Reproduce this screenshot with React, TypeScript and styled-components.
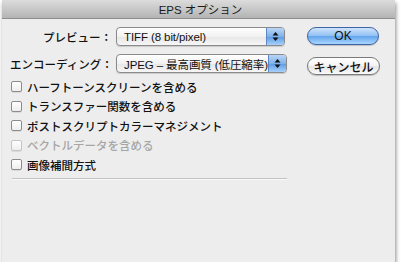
import React from "react";
import styled, { createGlobalStyle } from "styled-components";

const Global = createGlobalStyle`
  html, body { margin: 0; padding: 0; background: #ffffff; }
  body { font-family: "Liberation Sans", "Noto Sans CJK JP", sans-serif; }
`;

const FONT = `"Liberation Sans", "Noto Sans CJK JP", sans-serif`;

const Window = styled.div`
  margin-left: 2px;
  width: 393px;
  height: 262px;
  background: #ededed;
  box-shadow: 1px 3px 4px rgba(0, 0, 0, 0.45);
  display: flex;
  flex-direction: column;
`;

const TitleBar = styled.div`
  height: 18px;
  background: linear-gradient(#dcdcdc, #b4b4b4);
  border-bottom: 1px solid #8e8e8e;
  display: flex;
  align-items: center;
  justify-content: center;
  font-family: ${FONT};
  font-size: 11.5px;
  color: #1a1a1a;
  padding-left: 4px;
`;

const Body = styled.div`
  padding: 8px 0 0 8px;
  display: flex;
  flex-direction: column;
`;

const Top = styled.div`
  display: flex;
  align-items: flex-start;
`;

const Form = styled.div`
  display: grid;
  grid-template-columns: 102px auto;
  column-gap: 4px;
  row-gap: 8px;
  align-items: center;
`;

const Label = styled.div`
  text-align: right;
  font-family: ${FONT};
  font-size: 11.5px;
  font-weight: 500;
  color: #111;
  white-space: nowrap;
`;

const Popup = styled.div<{ $w: number }>`
  width: ${(p) => p.$w}px;
  height: 19px;
  box-sizing: border-box;
  border: 1px solid #8a8a8a;
  border-radius: 4px;
  background: linear-gradient(#ffffff, #f1f1f1 50%, #e6e6e6 51%, #f6f6f6);
  display: flex;
  align-items: stretch;
  overflow: hidden;
  box-shadow: 0 1px 1px rgba(0, 0, 0, 0.15);
`;

const PopupText = styled.div`
  flex: 1;
  min-width: 0;
  display: flex;
  align-items: center;
  padding-left: 7px;
  font-family: ${FONT};
  font-size: 11.5px;
  letter-spacing: -0.1px;
  color: #111;
  white-space: nowrap;
  overflow: hidden;
`;

const Arrows = styled.div`
  width: 17px;
  flex: none;
  border-left: 1px solid #5d86c4;
  background: linear-gradient(#b9d6f6, #80b2ea 50%, #5a9ae3 51%, #a8d0fb);
  display: flex;
  align-items: center;
  justify-content: center;
`;

const Buttons = styled.div`
  margin-left: 20px;
  display: flex;
  flex-direction: column;
  gap: 12px;
`;

const PushButton = styled.div<{ $default?: boolean; $w: number }>`
  width: ${(p) => p.$w}px;
  height: 18px;
  box-sizing: border-box;
  border-radius: 9px;
  border: 1px solid ${(p) => (p.$default ? "#3d64a6" : "#7a7a7a")};
  background: ${(p) =>
    p.$default
      ? "linear-gradient(#cfe4fb, #8fc0f3 50%, #62a3ec 51%, #a9d6ff)"
      : "linear-gradient(#ffffff, #f3f3f3 50%, #e4e4e4 51%, #fafafa)"};
  display: flex;
  align-items: center;
  justify-content: center;
  font-family: ${FONT};
  font-size: 12px;
  font-weight: 500;
  color: #111;
  box-shadow: 0 1px 1px rgba(0, 0, 0, 0.2);
`;

const CheckList = styled.div`
  margin-top: 2px;
  display: flex;
  flex-direction: column;
`;

const CheckRow = styled.div<{ $disabled?: boolean }>`
  height: 19.5px;
  display: flex;
  align-items: center;
  gap: 5px;
  padding-left: 1px;
  font-family: ${FONT};
  font-size: 11.5px;
  font-weight: 500;
  color: ${(p) => (p.$disabled ? "#a6a6a6" : "#111")};
`;

const Box = styled.div<{ $disabled?: boolean }>`
  width: 11px;
  height: 11px;
  box-sizing: border-box;
  border: 1px solid ${(p) => (p.$disabled ? "#c4c4c4" : "#8c8c8c")};
  border-radius: 2px;
  background: linear-gradient(#ffffff, #eeeeee);
  box-shadow: 0 1px 0 rgba(0, 0, 0, 0.08);
`;

const Separator = styled.div`
  margin-top: 3px;
  margin-left: 2px;
  width: 275px;
  height: 1px;
  background: #c2c2c2;
  border-bottom: 1px solid #fafafa;
`;

const UpDown = () => (
  <svg width="7" height="11" viewBox="0 0 7 11">
    <path d="M3.5 1 L6.5 4.5 L0.5 4.5 Z" fill="#111" />
    <path d="M3.5 10 L6.5 6.5 L0.5 6.5 Z" fill="#111" />
  </svg>
);

const options = [
  { text: "ハーフトーンスクリーンを含める" },
  { text: "トランスファー関数を含める" },
  { text: "ポストスクリプトカラーマネジメント" },
  { text: "ベクトルデータを含める", disabled: true },
  { text: "画像補間方式" },
];

export default function App() {
  return (
    <>
      <Global />
      <Window>
        <TitleBar>EPS オプション</TitleBar>
        <Body>
          <Top>
            <Form>
              <Label>プレビュー：</Label>
              <Popup $w={169}>
                <PopupText>TIFF (8 bit/pixel)</PopupText>
                <Arrows>
                  <UpDown />
                </Arrows>
              </Popup>
              <Label>エンコーディング：</Label>
              <Popup $w={171}>
                <PopupText>JPEG – 最高画質 (低圧縮率)</PopupText>
                <Arrows>
                  <UpDown />
                </Arrows>
              </Popup>
            </Form>
            <Buttons>
              <PushButton $default $w={72}>OK</PushButton>
              <PushButton $w={73}>キャンセル</PushButton>
            </Buttons>
          </Top>
          <CheckList>
            {options.map((o) => (
              <CheckRow key={o.text} $disabled={o.disabled}>
                <Box $disabled={o.disabled} />
                {o.text}
              </CheckRow>
            ))}
          </CheckList>
          <Separator />
        </Body>
      </Window>
    </>
  );
}
